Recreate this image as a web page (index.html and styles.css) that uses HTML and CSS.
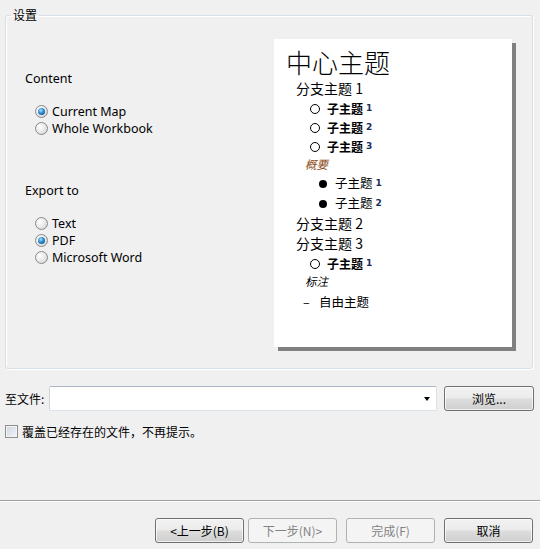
FILE: index.html
```html
<!DOCTYPE html>
<html lang="zh">
<head>
<meta charset="utf-8">
<title>导出</title>
<link rel="stylesheet" href="styles.css">
</head>
<body>
<div class="dialog">
  <fieldset class="group">
    <legend class="group-title">设置</legend>
    <div class="group-body">
      <div class="options">
        <div class="section-label first">Content</div>
        <div class="radio-list">
          <div class="radio checked"><span class="radio-mark"></span><span>Current Map</span></div>
          <div class="radio"><span class="radio-mark"></span><span>Whole Workbook</span></div>
        </div>
        <div class="section-label second">Export to</div>
        <div class="radio-list">
          <div class="radio"><span class="radio-mark"></span><span>Text</span></div>
          <div class="radio checked"><span class="radio-mark"></span><span>PDF</span></div>
          <div class="radio"><span class="radio-mark"></span><span>Microsoft Word</span></div>
        </div>
      </div>
      <div class="preview">
        <div class="p-row p-title">中心主题</div>
        <div class="p-row p-branch b1">分支主题 1</div>
        <div class="p-row p-sub s1"><span class="ring"></span><b>子主题</b><span class="num">1</span></div>
        <div class="p-row p-sub s2"><span class="ring"></span><b>子主题</b><span class="num">2</span></div>
        <div class="p-row p-sub s3"><span class="ring"></span><b>子主题</b><span class="num">3</span></div>
        <div class="p-row p-note summary">概要</div>
        <div class="p-row p-dot d1"><span class="dot"></span><span>子主题</span><span class="num">1</span></div>
        <div class="p-row p-dot d2"><span class="dot"></span><span>子主题</span><span class="num">2</span></div>
        <div class="p-row p-branch b2">分支主题 2</div>
        <div class="p-row p-branch b3">分支主题 3</div>
        <div class="p-row p-sub s4"><span class="ring"></span><b>子主题</b><span class="num">1</span></div>
        <div class="p-row p-note callout">标注</div>
        <div class="p-row p-free"><span class="dash">–</span><span>自由主题</span></div>
      </div>
    </div>
  </fieldset>

  <div class="file-row">
    <span class="file-label">至文件:</span>
    <div class="combo"><span class="combo-arrow"></span></div>
    <div class="btn browse">浏览...</div>
  </div>

  <div class="check-row">
    <span class="checkbox"></span>
    <span>覆盖已经存在的文件，不再提示。</span>
  </div>

  <div class="separator"></div>

  <div class="button-row">
    <div class="btn">&lt;上一步(B)</div>
    <div class="btn disabled">下一步(N)&gt;</div>
    <div class="btn disabled finish">完成(F)</div>
    <div class="btn cancel">取消</div>
  </div>
</div>
</body>
</html>
```

FILE: styles.css
```css
html, body {
  margin: 0;
  padding: 0;
  background: #f0f0f0;
}

body {
  width: 540px;
  height: 549px;
  overflow: hidden;
  font-family: "Noto Sans", "Noto Sans CJK SC", sans-serif;
  font-size: 12px;
  color: #000;
}

.dialog {
  display: flex;
  flex-direction: column;
  padding-top: 8px;
}

.group {
  margin: 0 0 0 5px;
  padding: 0;
  width: 528px;
  height: 361px;
  box-sizing: border-box;
  border: 1px solid #d5dfe5;
  border-radius: 3px;
  box-shadow: inset 1px 1px 0 #fff, 1px 1px 0 #fff;
  min-width: 0;
}

.group-title {
  margin-left: 5px;
  padding: 0 2px;
  font-family: "Noto Sans CJK SC", sans-serif;
  font-size: 12px;
  line-height: 14px;
  height: 14px;
}

.group-body {
  display: flex;
  align-items: flex-start;
}

.options {
  width: 268px;
  padding-left: 19px;
  box-sizing: border-box;
  display: flex;
  flex-direction: column;
}

.section-label {
  line-height: 16px;
  height: 16px;
  font-size: 12.5px;
}

.section-label.first {
  margin-top: 49px;
}

.section-label.second {
  margin-top: 46px;
}

.radio-list {
  display: flex;
  flex-direction: column;
  margin-top: 16px;
  padding-left: 10px;
}

.radio {
  display: flex;
  align-items: center;
  height: 17px;
  line-height: 17px;
  gap: 4px;
  font-size: 12.5px;
}

.radio-mark {
  width: 11px;
  height: 11px;
  border-radius: 50%;
  border: 1px solid #8a8a8a;
  background: radial-gradient(circle at 35% 35%, #ffffff 0%, #e6e6e6 55%, #c8c8c8 100%);
  display: flex;
  align-items: center;
  justify-content: center;
  flex: none;
}

.radio.checked .radio-mark::after {
  content: "";
  width: 7px;
  height: 7px;
  border-radius: 50%;
  background: radial-gradient(circle at 40% 35%, #a9e1ff 0%, #2a8ad0 45%, #0d3f6e 100%);
}

.preview {
  margin-top: 17px;
  width: 238px;
  height: 308px;
  background: #fff;
  box-shadow: 4px 4px 0 #808080;
  display: flex;
  flex-direction: column;
  padding-top: 7px;
  box-sizing: border-box;
  font-family: "Noto Sans CJK SC", sans-serif;
}

.p-row {
  display: flex;
  align-items: center;
  white-space: nowrap;
  line-height: 1;
}

.p-title {
  height: 31px;
  padding-left: 12px;
  font-size: 26px;
  font-weight: 300;
}

.p-branch {
  height: 20px;
  padding-left: 22px;
  font-size: 14px;
}

.p-branch.b1 {
  height: 22px;
}

.p-sub {
  height: 19px;
  padding-left: 36px;
  font-size: 12px;
}

.p-sub.s4 {
  height: 21px;
}

.ring {
  width: 8px;
  height: 8px;
  border: 1px solid #000;
  border-radius: 50%;
  margin-right: 7px;
}

.p-sub b {
  font-weight: 700;
}

.num {
  font-size: 9px;
  font-weight: 700;
  color: #1b2c5c;
  margin-left: 3px;
  font-family: "DejaVu Sans", sans-serif;
}

.p-note {
  height: 17px;
  padding-left: 31px;
  font-size: 11.5px;
  font-style: italic;
}

.p-note.summary {
  color: #8a4a14;
}

.p-note.callout {
  height: 16px;
}

.p-dot {
  height: 19px;
  padding-left: 45px;
  font-size: 12.5px;
}

.p-dot.d1 {
  height: 21px;
}

.dot {
  width: 8px;
  height: 8px;
  background: #000;
  border-radius: 50%;
  margin-right: 8px;
}

.p-free {
  height: 24px;
  padding-left: 29px;
  font-size: 12.5px;
}

.dash {
  width: 16px;
}

.file-row {
  display: flex;
  align-items: center;
  margin-top: 17px;
  height: 25px;
  padding-left: 5px;
  font-family: "Noto Sans CJK SC", sans-serif;
}

.file-label {
  width: 44px;
}

.combo {
  width: 388px;
  height: 25px;
  box-sizing: border-box;
  background: #fff;
  border: 1px solid #dbe3ea;
  border-top-color: #abb8c6;
  border-left-color: #cdd6df;
  border-radius: 2px;
  display: flex;
  align-items: center;
  justify-content: flex-end;
  padding-right: 6px;
}

.combo-arrow {
  width: 0;
  height: 0;
  border-left: 3.5px solid transparent;
  border-right: 3.5px solid transparent;
  border-top: 4px solid #000;
}

.btn {
  width: 89px;
  height: 25px;
  box-sizing: border-box;
  border: 1px solid #707070;
  border-radius: 3px;
  background: linear-gradient(#f2f2f2 0%, #ebebeb 48%, #dddddd 52%, #cfcfcf 100%);
  box-shadow: inset 0 0 0 1px rgba(255, 255, 255, 0.7);
  display: flex;
  align-items: center;
  justify-content: center;
  font-family: "Noto Sans CJK SC", sans-serif;
  font-size: 12px;
}

.btn.browse {
  width: 90px;
  margin-left: 7px;
}

.check-row {
  display: flex;
  align-items: center;
  height: 13px;
  margin-top: 14px;
  padding-left: 5px;
  gap: 4px;
  font-family: "Noto Sans CJK SC", sans-serif;
}

.checkbox {
  width: 11px;
  height: 11px;
  border: 1px solid #8e8f8f;
  background: linear-gradient(135deg, #cbd5df 0%, #f4f6f8 100%);
  box-shadow: inset 0 0 0 1px #f4f4f4;
}

.separator {
  margin-top: 62px;
  height: 0;
  border-top: 1px solid #a0a0a0;
  border-bottom: 1px solid #fff;
}

.button-row {
  display: flex;
  margin-top: 16px;
  padding-left: 155px;
  gap: 4px;
}

.btn.disabled {
  border-color: #adb2b5;
  background: #f4f4f4;
  color: #838383;
  box-shadow: none;
}

.btn.finish {
  margin-left: 5px;
}

.btn.cancel {
  margin-left: 5px;
}
```
